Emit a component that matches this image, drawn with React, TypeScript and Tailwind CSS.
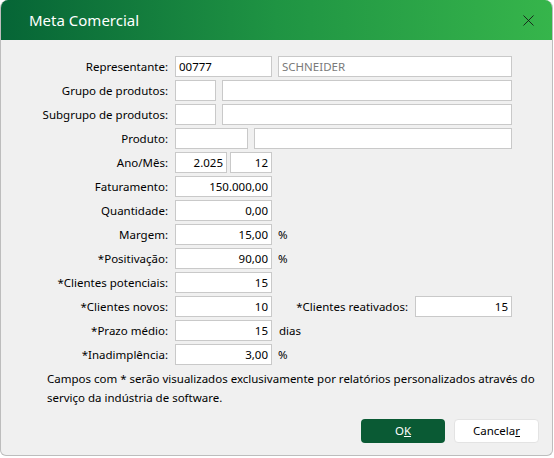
import { X } from "lucide-react";

const font = { fontFamily: '"Noto Sans", "Open Sans", sans-serif' };

function Field({ w, value = "", right = false, muted = false }: { w: string; value?: string; right?: boolean; muted?: boolean }) {
  return (
    <div
      className={`${w} h-[21px] bg-white border border-[#c9c9c9] flex items-center px-[3px] text-[11.5px] ${
        right ? "justify-end" : "justify-start"
      } ${muted ? "text-[#7a7a7a]" : "text-black"}`}
    >
      {value}
    </div>
  );
}

function Row({ label, children }: { label: string; children?: React.ReactNode }) {
  return (
    <div className="flex items-center h-[21px]">
      <div className="w-[167px] text-right text-[11.5px] text-black">{label}</div>
      <div className="ml-[7px] flex items-center">{children}</div>
    </div>
  );
}

export default function App() {
  return (
    <div className="w-[554px] h-[458px] bg-white" style={font}>
      <div className="w-[553px] h-[456px] flex flex-col rounded-t-[8px] rounded-b-[6px] overflow-hidden border-x border-b border-[#bdbdbd] bg-[#f0f0f0]">
        {/* title bar */}
        <div className="h-[40px] shrink-0 flex items-center justify-between pl-[28px] pr-[14px] bg-gradient-to-r from-[#066536] via-[#1f9443] to-[#36b54b]">
          <span className="text-white text-[15px] leading-none">Meta Comercial</span>
          <X size={19} strokeWidth={1.1} className="text-[#151515]" />
        </div>

        {/* form */}
        <div className="flex flex-col gap-[3px] pt-[16px]">
          <Row label="Representante:">
            <Field w="w-[97px]" value="00777" />
            <div className="ml-[6px]">
              <Field w="w-[234px]" value="SCHNEIDER" muted />
            </div>
          </Row>
          <Row label="Grupo de produtos:">
            <Field w="w-[41px]" />
            <div className="ml-[6px]">
              <Field w="w-[290px]" />
            </div>
          </Row>
          <Row label="Subgrupo de produtos:">
            <Field w="w-[41px]" />
            <div className="ml-[6px]">
              <Field w="w-[290px]" />
            </div>
          </Row>
          <Row label="Produto:">
            <Field w="w-[73px]" />
            <div className="ml-[6px]">
              <Field w="w-[258px]" />
            </div>
          </Row>
          <Row label="Ano/Mês:">
            <Field w="w-[52px]" value="2.025" right />
            <div className="ml-[3px]">
              <Field w="w-[42px]" value="12" right />
            </div>
          </Row>
          <Row label="Faturamento:">
            <Field w="w-[97px]" value="150.000,00" right />
          </Row>
          <Row label="Quantidade:">
            <Field w="w-[97px]" value="0,00" right />
          </Row>
          <Row label="Margem:">
            <Field w="w-[97px]" value="15,00" right />
            <span className="ml-[6px] text-[11.5px]">%</span>
          </Row>
          <Row label="*Positivação:">
            <Field w="w-[97px]" value="90,00" right />
            <span className="ml-[6px] text-[11.5px]">%</span>
          </Row>
          <Row label="*Clientes potenciais:">
            <Field w="w-[97px]" value="15" right />
          </Row>
          <Row label="*Clientes novos:">
            <Field w="w-[97px]" value="10" right />
            <div className="w-[136px] text-right text-[11.5px]">*Clientes reativados:</div>
            <div className="ml-[7px]">
              <Field w="w-[97px]" value="15" right />
            </div>
          </Row>
          <Row label="*Prazo médio:">
            <Field w="w-[97px]" value="15" right />
            <span className="ml-[7px] text-[11.5px]">dias</span>
          </Row>
          <Row label="*Inadimplência:">
            <Field w="w-[97px]" value="3,00" right />
            <span className="ml-[6px] text-[11.5px]">%</span>
          </Row>
        </div>

        {/* note */}
        <p className="mt-[4px] pl-[46px] pr-[10px] text-[11.5px] leading-[19px] text-black">
          Campos com * serão visualizados exclusivamente por relatórios personalizados através do serviço da indústria de software.
        </p>

        {/* buttons */}
        <div className="flex justify-end gap-[9px] pr-[13px] mt-auto mb-[12px]">
          <button className="w-[84px] h-[24px] rounded-[4px] bg-[#0a5a34] text-white text-[11.5px]">
            O<span className="underline">K</span>
          </button>
          <button className="w-[85px] h-[24px] rounded-[4px] bg-white border border-[#e3e3e3] text-black text-[11.5px]">
            Cancela<span className="underline">r</span>
          </button>
        </div>
      </div>
    </div>
  );
}
